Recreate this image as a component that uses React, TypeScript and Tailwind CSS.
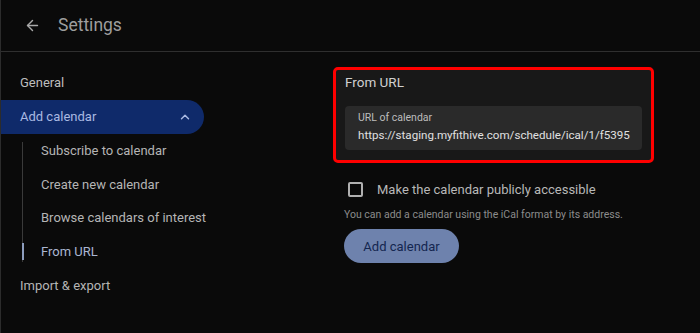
import { ArrowLeft, ChevronUp } from "lucide-react";

const subItems = [
  "Subscribe to calendar",
  "Create new calendar",
  "Browse calendars of interest",
];

export default function App() {
  return (
    <div className="h-[333px] w-[700px] overflow-hidden bg-[#0a0a0a] border-l border-[#2c2c2c] font-['Roboto',sans-serif] text-[#c4c4c4]">
      {/* Header */}
      <div className="flex h-[52px] items-center border-b border-[#2f2f2f] pl-[23px]">
        <ArrowLeft className="h-[17px] w-[17px] text-[#a9a9a9]" strokeWidth={2} />
        <span className="ml-[17px] text-[17.5px] text-[#9e9e9e]">Settings</span>
      </div>

      <div className="flex">
        {/* Sidebar */}
        <nav className="w-[332px] shrink-0 pt-[22px] text-[13px]">
          <div className="flex h-[17px] items-center pl-[19px] text-[#bdbdbd]">General</div>
          <div className="mt-[9px] flex h-[34px] w-[203px] items-center justify-between rounded-r-full bg-[#0f2a6a] pl-[19px] pr-[12px] text-[#a9b9e2]">
            <span>Add calendar</span>
            <ChevronUp className="h-[14px] w-[14px] text-[#a9b9e2]" strokeWidth={2.5} />
          </div>
          <div className="relative ml-[21px]">
            {/* tree guide line */}
            <span className="absolute bottom-[6px] left-0 top-[8px] w-px bg-[#3a3a3a]" />
            {subItems.map((item) => (
              <div key={item} className="flex h-[33.5px] items-center pl-[19px] text-[#b5b5b5]">
                {item}
              </div>
            ))}
            <div className="relative flex h-[33.5px] items-center pl-[19px] text-[#aab6d2]">
              <span className="absolute left-0 top-[8px] h-[17px] w-[2px] bg-[#8d9dbd]" />
              From URL
            </div>
          </div>
          <div className="mt-[5px] flex h-[25px] items-center pl-[19px] text-[#b5b5b5]">Import &amp; export</div>
        </nav>

        {/* Main */}
        <main className="pt-[15px]">
          <div className="w-[321px] rounded-[5px] border-[3px] border-[#ff0000] bg-[#181818] px-[9px] pb-[10px] pt-[2px]">
            <div className="text-[13.5px] leading-[20px] text-[#d0d0d0]">From URL</div>
            <div className="mt-[14px] rounded-[4px] bg-[#2a2a2a] px-[13px] pb-[6px] pt-[5px]">
              <div className="text-[10.5px] leading-[13px] text-[#bdbdbd]">URL of calendar</div>
              <div className="mt-[3px] whitespace-nowrap text-[11.6px] leading-[17px] text-[#e0e0e0]">
                https://staging.myfithive.com/schedule/ical/1/f5395
              </div>
            </div>
          </div>

          <div className="ml-[15px] mt-[17px] flex items-center">
            <span className="h-[15px] w-[15px] rounded-[2px] border-2 border-[#b0b0b0]" />
            <span className="ml-[14px] text-[13px] text-[#b8b8b8]">Make the calendar publicly accessible</span>
          </div>
          <p className="ml-[11px] mt-[7px] text-[10.5px] text-[#8c8c8c]">
            You can add a calendar using the iCal format by its address.
          </p>
          <button className="ml-[11px] mt-[7px] h-[34px] w-[115px] rounded-full bg-[#6e82ad] text-[13px] text-[#142650]">
            Add calendar
          </button>
        </main>
      </div>
    </div>
  );
}
